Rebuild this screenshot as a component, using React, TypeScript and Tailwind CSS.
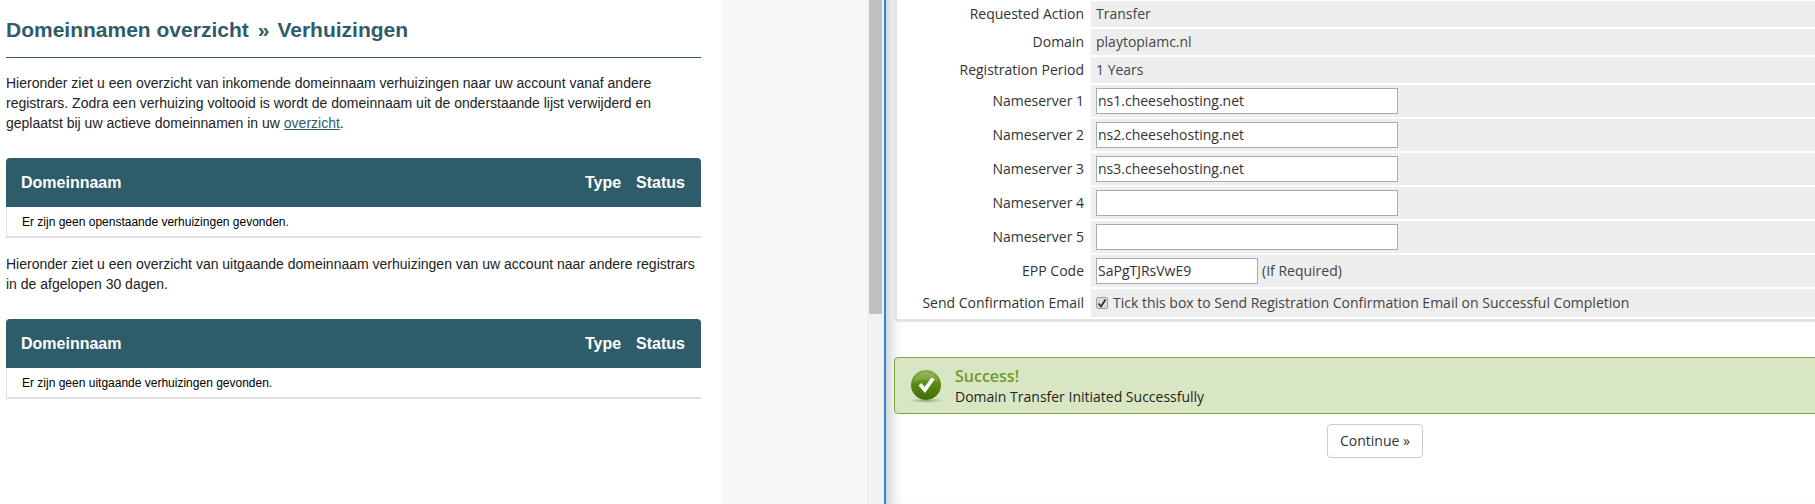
const rows = [
  { label: 'Requested Action', value: 'Transfer', h: 'h-[26px]' },
  { label: 'Domain', value: 'playtopiamc.nl', h: 'h-[26px]' },
  { label: 'Registration Period', value: '1 Years', h: 'h-[26px]' },
];

const nameservers = [
  { label: 'Nameserver 1', value: 'ns1.cheesehosting.net' },
  { label: 'Nameserver 2', value: 'ns2.cheesehosting.net' },
  { label: 'Nameserver 3', value: 'ns3.cheesehosting.net' },
  { label: 'Nameserver 4', value: '' },
  { label: 'Nameserver 5', value: '' },
];

function TransferTable({ message }: { message: string }) {
  return (
    <div>
      <div className="flex h-[49px] items-center rounded-t bg-[#2e5c6b] pl-[15px] pr-[16px] text-[16px] font-bold text-white">
        <span className="flex-1">Domeinnaam</span>
        <span className="mr-[15px]">Type</span>
        <span>Status</span>
      </div>
      <div className="flex h-[31px] items-center border-b-2 border-l border-[#dfe3e6] pl-[15px] text-[12px] text-black">
        {message}
      </div>
    </div>
  );
}

function FormRow({ label, h, children }: { label: string; h: string; children: React.ReactNode }) {
  return (
    <div className={`flex ${h}`}>
      <div className="flex w-[194px] shrink-0 items-center justify-end pb-[2px] pr-[7px] text-[#333333]">{label}</div>
      <div className="flex flex-1 items-center bg-[#eeeeee] pl-[5px] text-[#444444]">{children}</div>
    </div>
  );
}

function TextField({ value, wide = true }: { value: string; wide?: boolean }) {
  return (
    <input
      readOnly
      value={value}
      className={`h-[26px] border border-[#aaaaaa] bg-white pb-[2px] pl-px pr-[2px] text-[14px] text-[#333333] outline-none ${wide ? 'w-[302px]' : 'w-[162px]'}`}
    />
  );
}

function SuccessIcon() {
  return (
    <svg width="36" height="36" viewBox="0 0 36 36" className="shrink-0">
      <defs>
        <linearGradient id="orb" x1="0" y1="0" x2="0" y2="1">
          <stop offset="0" stopColor="#8db14c" />
          <stop offset="0.45" stopColor="#5c8a17" />
          <stop offset="1" stopColor="#3f6d06" />
        </linearGradient>
        <radialGradient id="orbShadow">
          <stop offset="0" stopColor="#5a6b46" stopOpacity="0.55" />
          <stop offset="1" stopColor="#5a6b46" stopOpacity="0" />
        </radialGradient>
      </defs>
      <ellipse cx="18" cy="32.5" rx="18" ry="2.5" fill="url(#orbShadow)" />
      <circle cx="18" cy="17" r="15" fill="url(#orb)" />
      <path d="M5 14 A13.5 13.5 0 0 1 31 14 Q18 9 5 14 Z" fill="#ffffff" opacity="0.14" />
      <path d="M10.5 17.5 L13.5 15 L16.5 19 L23.5 9.5 L26.5 11.5 L17 25 Z" fill="#ffffff" />
    </svg>
  );
}

export default function App() {
  return (
    <div className="flex h-[504px] w-[1815px] overflow-hidden bg-white">
      {/* Left screenshot: domain overview */}
      <div className="w-[721px] shrink-0 pl-[6px] pr-[20px] font-['Liberation_Sans',Arial,sans-serif] text-[14px] leading-[20px] text-[#222222]">
        <h1 className="flex h-[57px] items-center pt-[2px] text-[21px] font-bold text-[#2e5c6b]">
          Domeinnamen overzicht<span className="ml-[9px] mr-[8px]">»</span>Verhuizingen
        </h1>
        <div className="h-px bg-[#2e5c6b]" />
        <p className="mt-[15px]">
          Hieronder ziet u een overzicht van inkomende domeinnaam verhuizingen naar uw account vanaf andere registrars.
          Zodra een verhuizing voltooid is wordt de domeinnaam uit de onderstaande lijst verwijderd en geplaatst bij uw
          actieve domeinnamen in uw <a className="text-[#2e5c6b] underline">overzicht</a>.
        </p>
        <div className="mt-[25px]">
          <TransferTable message="Er zijn geen openstaande verhuizingen gevonden." />
        </div>
        <p className="mt-[16px]">
          Hieronder ziet u een overzicht van uitgaande domeinnaam verhuizingen van uw account naar andere registrars in
          de afgelopen 30 dagen.
        </p>
        <div className="mt-[25px]">
          <TransferTable message="Er zijn geen uitgaande verhuizingen gevonden." />
        </div>
      </div>

      {/* Gutter and scrollbar between the two screenshots */}
      <div className="w-[146px] shrink-0 bg-[#f5f7f9]" />
      <div className="w-[17px] shrink-0 bg-[#f1f1f1] pl-[2px] pr-[2px]">
        <div className="h-[314px] w-[13px] bg-[#c1c1c1]" />
      </div>

      {/* Right screenshot: domain transfer form */}
      <div className="min-w-0 flex-1 overflow-hidden border-l-2 border-[#2a86d6] bg-white pl-[8px] font-['Open_Sans',sans-serif] text-[14px] shadow-[inset_14px_0_12px_-8px_rgba(0,0,0,0.18)]">
        <div className="w-[962px]">
          <div className="flex flex-col gap-[2px] rounded-bl border-b-[3px] border-l-[3px] border-[#e0e4e6] bg-white pb-[2px] pt-px">
            {rows.map((r) => (
              <FormRow key={r.label} label={r.label} h={r.h}>
                <span className="pb-[2px]">{r.value}</span>
              </FormRow>
            ))}
            {nameservers.map((n) => (
              <FormRow key={n.label} label={n.label} h="h-[32px]">
                <TextField value={n.value} />
              </FormRow>
            ))}
            <FormRow label="EPP Code" h="h-[32px]">
              <TextField value="SaPgTJRsVwE9" wide={false} />
              <span className="ml-[4px] pb-[2px]">(If Required)</span>
            </FormRow>
            <FormRow label="Send Confirmation Email" h="h-[28px]">
              <span className="mr-[5px] flex h-[12px] w-[12px] items-center justify-center rounded-[2px] border border-[#a0a0a0] bg-[#dddddd]">
                <svg width="10" height="10" viewBox="0 0 10 10">
                  <path d="M1.5 5.5 L4 8.5 L8.5 1.5" fill="none" stroke="#333333" strokeWidth="1.8" />
                </svg>
              </span>
              <span className="pb-[2px]">Tick this box to Send Registration Confirmation Email on Successful Completion</span>
            </FormRow>
          </div>

          <div className="mt-[35px] flex h-[57px] items-center gap-[11px] rounded border border-[#7aa835] bg-[#d9e6c3] pl-[13px]">
            <SuccessIcon />
            <div>
              <div className="text-[16px] font-semibold leading-[22px] text-[#6f9c2a]">Success!</div>
              <div className="leading-[20px] text-[#1f1f1f]">Domain Transfer Initiated Successfully</div>
            </div>
          </div>

          <div className="mt-[10px] flex justify-center">
            <button className="h-[34px] w-[96px] rounded border border-[#cccccc] bg-white pb-px text-[#333333]">
              Continue »
            </button>
          </div>
        </div>
      </div>
    </div>
  );
}
